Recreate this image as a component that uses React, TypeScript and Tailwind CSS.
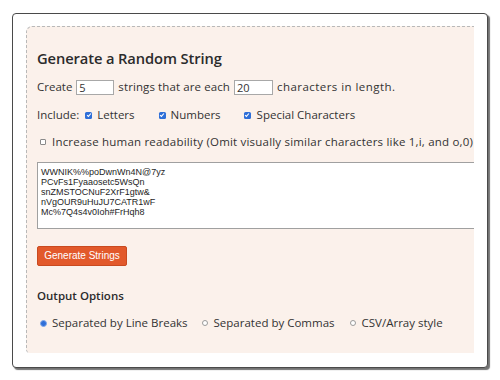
import React from "react";

const body = { fontFamily: '"Open Sans", "Noto Sans", sans-serif' };

function Check({ on }: { on: boolean }) {
  if (on) {
    return (
      <span className="inline-flex w-[7px] h-[7px] rounded-[1.5px] bg-[#2f6fd8] items-center justify-center shrink-0">
        <svg width="6" height="6" viewBox="0 0 6 6">
          <path d="M1.1 3.1 L2.4 4.4 L4.9 1.5" stroke="#fff" strokeWidth="1.1" fill="none" />
        </svg>
      </span>
    );
  }
  return <span className="inline-block w-[6px] h-[6px] rounded-[1px] border border-[#8a8a8a] bg-white shrink-0" />;
}

function Radio({ on }: { on: boolean }) {
  if (on) {
    return (
      <span className="inline-flex w-[7px] h-[7px] rounded-full bg-[#2f6fd8] border border-[#7fa8ea] shrink-0" />
    );
  }
  return <span className="inline-block w-[6px] h-[6px] rounded-full border border-[#9a9a9a] bg-white shrink-0" />;
}

const lines = [
  "WWNIK%%poDwnWn4N@7yz",
  "PCvFs1Fyaaosetc5WsQn",
  "snZMSTOCNuF2XrF1gtw&",
  "nVgOUR9uHuJU7CATR1wF",
  "Mc%7Q4s4v0Ioh#FrHqh8",
];

export default function App() {
  return (
    <div className="w-[500px] h-[380px] bg-white pt-[13px] pl-[12px]" style={body}>
      <div className="w-[476px] h-[355px] border border-[#4a4a4a] rounded-[4px] shadow-[2px_2px_1px_rgba(0,0,0,0.55)] bg-white pt-[12px] pl-[13px] pr-[13px] pb-[14px] flex flex-col">
        <div className="flex-1 bg-[#fbf1eb] border-t border-l border-dashed border-[#b9b9b9] rounded-tl-[6px] rounded-bl-[4px] overflow-hidden pl-[10px] pt-[21px] text-[11.5px] text-[#333] flex flex-col">
          <div className="text-[14.7px] font-semibold leading-[20px] text-[#2b2b2b] tracking-[-0.1px]">
            Generate a Random String
          </div>
          <div className="mt-[9px] flex items-center h-[20px] whitespace-nowrap">
            <span>Create</span>
            <span className="ml-[4px] w-[38px] h-[15px] border border-[#a8a8a8] bg-white text-[11px] leading-[13px] pl-[2px] text-[#333]">5</span>
            <span className="ml-[4px] tracking-[0.1px]">strings that are each</span>
            <span className="ml-[4px] w-[39px] h-[15px] border border-[#a8a8a8] bg-white text-[11px] leading-[13px] pl-[2px] text-[#333]">20</span>
            <span className="ml-[4px] tracking-[0.45px]">characters in length.</span>
          </div>
          <div className="mt-[8px] flex items-center h-[20px] whitespace-nowrap">
            <span>Include:</span>
            <span className="ml-[6px] flex items-center"><Check on /></span>
            <span className="ml-[5px]">Letters</span>
            <span className="ml-[24px] flex items-center"><Check on /></span>
            <span className="ml-[5px]">Numbers</span>
            <span className="ml-[23px] flex items-center"><Check on /></span>
            <span className="ml-[6px]">Special Characters</span>
          </div>
          <div className="mt-[7px] flex items-center h-[20px] whitespace-nowrap">
            <span className="ml-[3px] flex items-center"><Check on={false} /></span>
            <span className="ml-[6px] tracking-[0.2px]">Increase human readability (Omit visually similar characters like 1,i, and o,0)</span>
          </div>
          <textarea
            readOnly
            value={lines.join("\n")}
            className="mt-[10px] w-[450px] h-[67px] shrink-0 resize-none overflow-hidden bg-white border border-[#a0a0a0] pl-[3px] pt-[4px] text-[9px] leading-[10px] text-[#1e1e1e] outline-none"
            style={{ fontFamily: '"Liberation Sans", Arial, sans-serif' }}
          />
          <div className="mt-[17px]">
            <button
              className="h-[20px] w-[90px] bg-[#e2592b] border border-[#c94a20] rounded-[2px] text-white text-[10px] leading-[18px]"
              style={{ fontFamily: '"Liberation Sans", Arial, sans-serif' }}
            >
              Generate Strings
            </button>
          </div>
          <div className="mt-[20px] h-[20px] leading-[20px] text-[11.5px] font-semibold text-[#2b2b2b]">Output Options</div>
          <div className="mt-[7px] flex items-center h-[20px] whitespace-nowrap">
            <span className="ml-[3px] flex items-center"><Radio on /></span>
            <span className="ml-[5px]">Separated by Line Breaks</span>
            <span className="ml-[14px] flex items-center"><Radio on={false} /></span>
            <span className="ml-[6px]">Separated by Commas</span>
            <span className="ml-[15px] flex items-center"><Radio on={false} /></span>
            <span className="ml-[6px]">CSV/Array style</span>
          </div>
        </div>
      </div>
    </div>
  );
}
